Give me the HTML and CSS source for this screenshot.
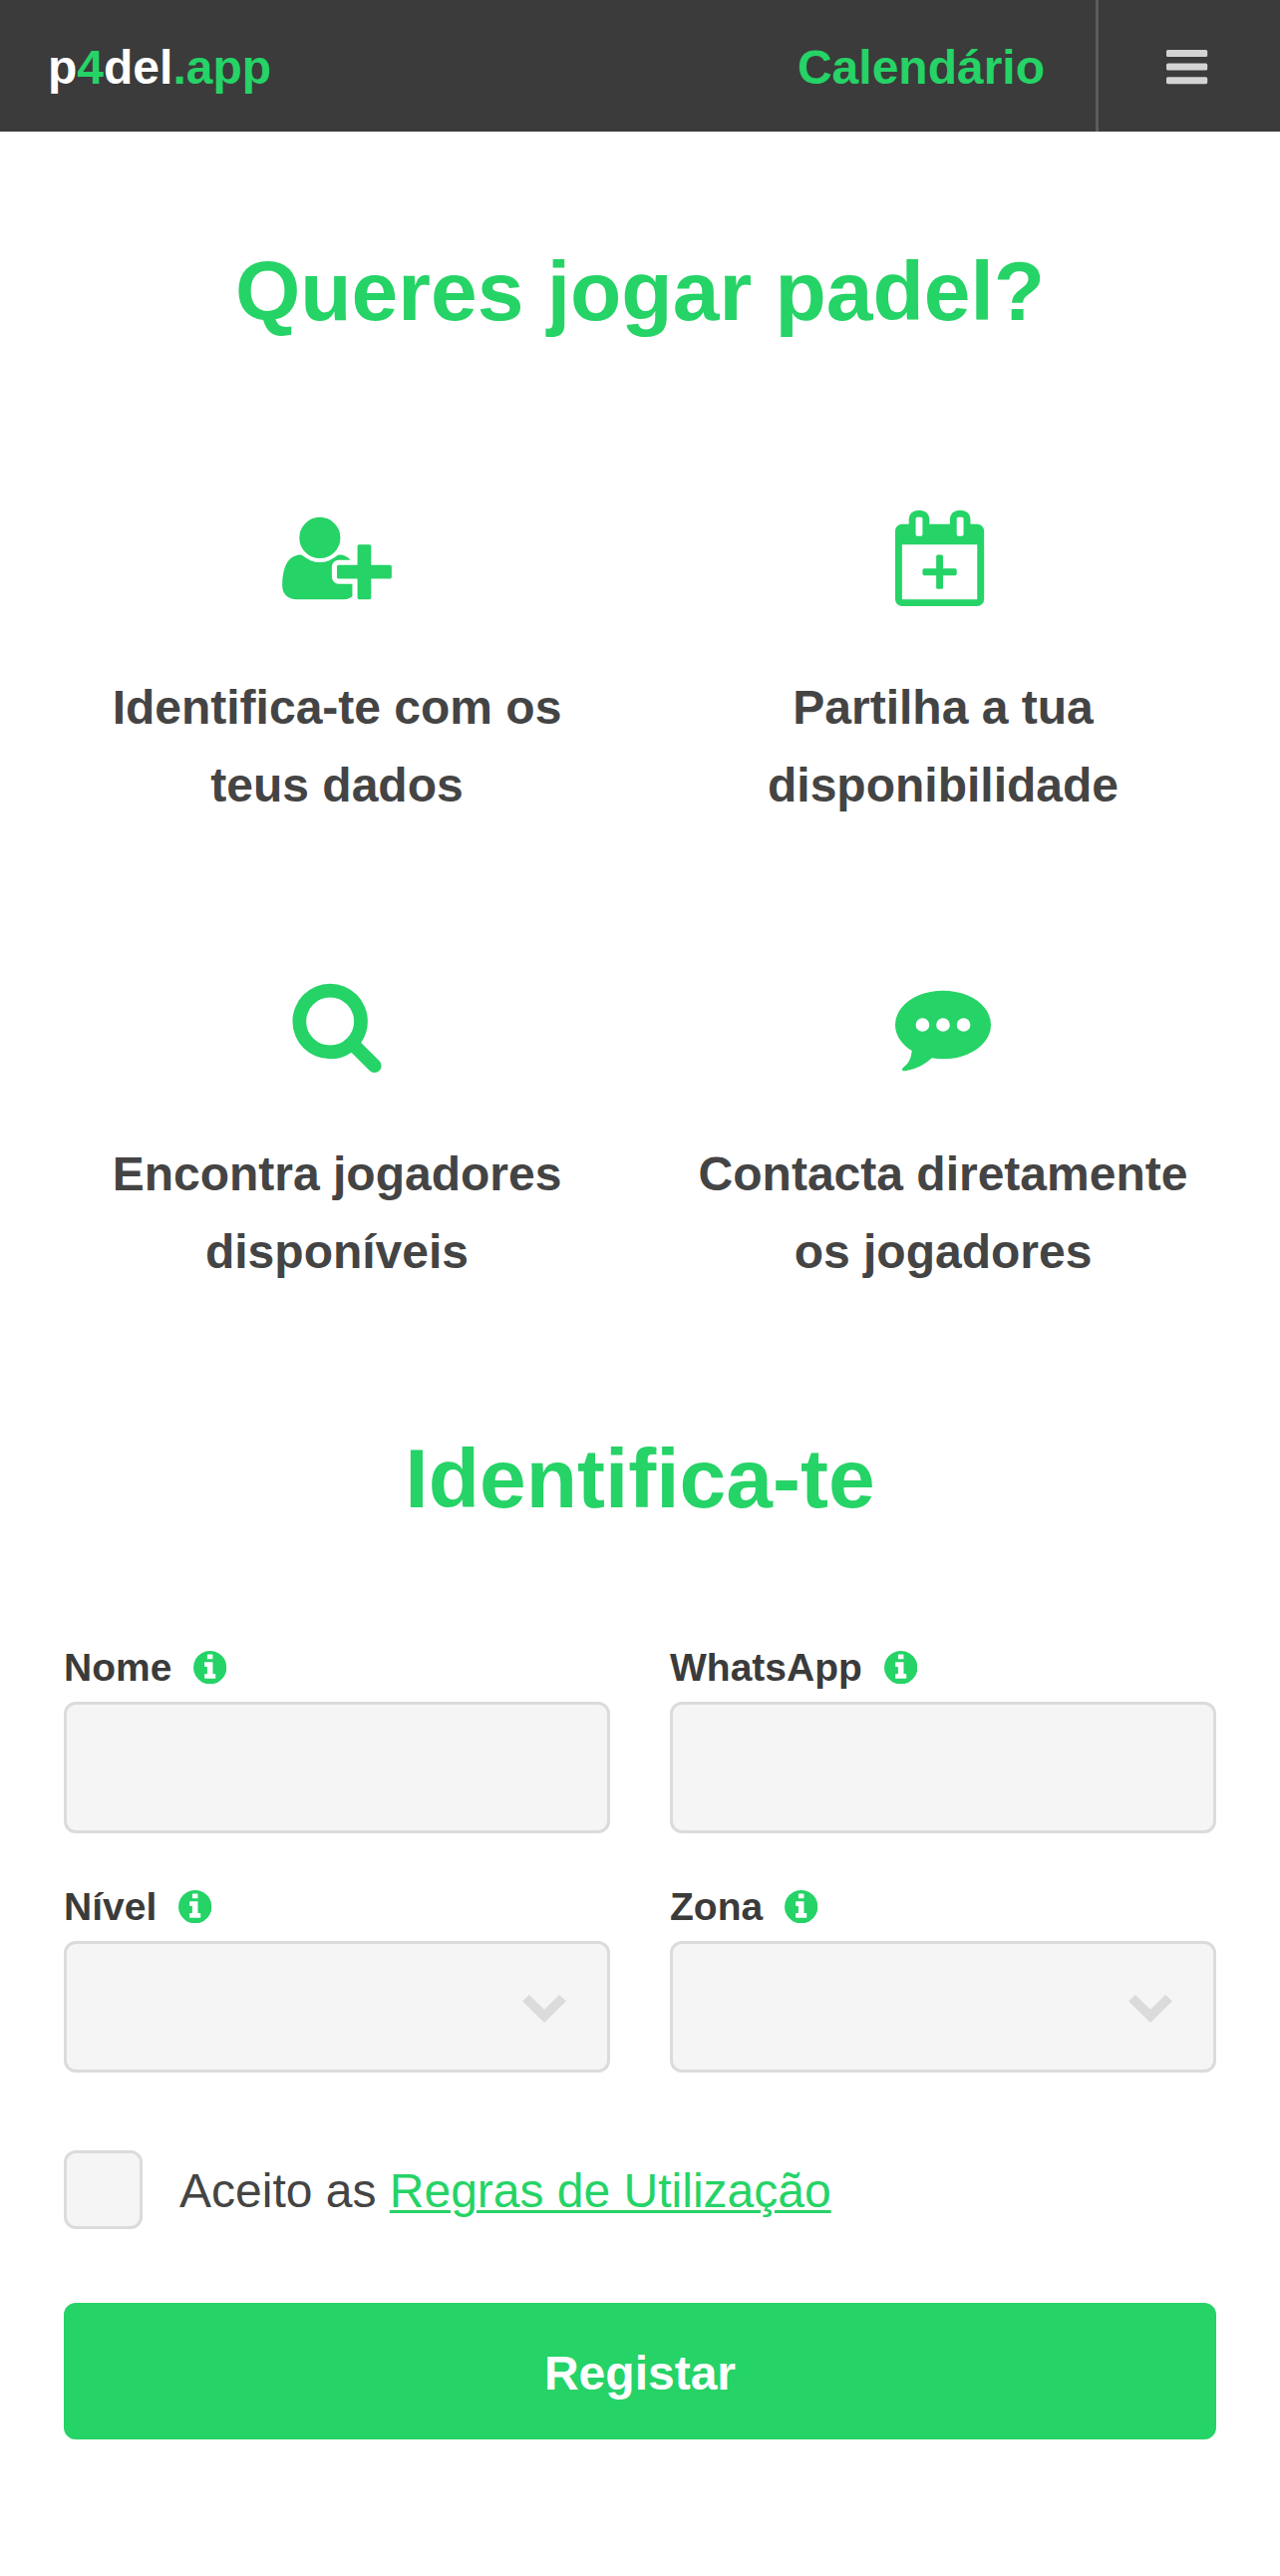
FILE: index.html
```html
<!DOCTYPE html>
<html lang="pt">
<head>
<meta charset="utf-8">
<title>p4del.app</title>
<link rel="stylesheet" href="styles.css">
</head>
<body>
<svg class="sprite" width="0" height="0" aria-hidden="true">
  <symbol id="info" viewBox="128 128 1536 1536"><path d="M1152 1376v-160q0-14-9-23t-23-9h-96v-512q0-14-9-23t-23-9h-320q-14 0-23 9t-9 23v160q0 14 9 23t23 9h96v320h-96q-14 0-23 9t-9 23v160q0 14 9 23t23 9h448q14 0 23-9t9-23zm-128-896v-160q0-14-9-23t-23-9h-192q-14 0-23 9t-9 23v160q0 14 9 23t23 9h192q14 0 23-9t9-23zm640 416q0 209-103 385.5t-279.5 279.5-385.5 103-385.5-103-279.5-279.5-103-385.5 103-385.5 279.5-279.5 385.5-103 385.5 103 279.5 279.5 103 385.5z"/></symbol>
  <symbol id="chevron" viewBox="0 0 44 28"><path d="M6.8 .4 22 15.2 37.2 .4 43.4 6.4 22 27.6 .6 6.4z" stroke-width=".8" stroke-linejoin="round"/></symbol>
</svg>

<header class="header">
  <a class="logo">p<span class="accent">4</span>del<span class="accent">.app</span></a>
  <nav class="nav">
    <a class="nav-link">Calendário</a>
    <button class="menu" aria-label="Menu">
      <svg class="menu-icon" viewBox="0 0 42 34"><rect width="41.2" height="7" rx="1.6"/><rect y="13.6" width="41.2" height="7" rx="1.6"/><rect y="27.2" width="41.2" height="7" rx="1.6"/></svg>
    </button>
  </nav>
</header>

<main class="main">
  <h1 class="title">Queres jogar padel?</h1>

  <section class="steps">
    <div class="step">
      <svg class="step-icon step-icon-wide" viewBox="0 0 2048 1792"><path d="M704 896q-159 0-271.5-112.5t-112.5-271.5 112.5-271.5 271.5-112.5 271.5 112.5 112.5 271.5-112.5 271.5-271.5 112.5zm960 128h352q13 0 22.500 9.500t9.500 22.500v192q0 13-9.500 22.500t-22.500 9.500h-352v352q0 13-9.500 22.500t-22.500 9.500h-192q-13 0-22.500-9.500t-9.500-22.500v-352h-352q-13 0-22.500-9.500t-9.500-22.500v-192q0-13 9.500-22.500t22.500-9.500h352v-352q0-13 9.500-22.500t22.500-9.500h192q13 0 22.500 9.500t9.500 22.500v352zm-736 224q0 52 38 90t90 38h256v238q-68 50-171 50h-874q-121 0-194-69t-73-190q0-53 3.500-103.500t14-109 26.500-108.500 43-97.500 62-81 85.500-53.500 111.500-20q19 0 39 17 79 61 154.500 91.500t164.500 30.500 164.500-30.500 154.500-91.500q20-17 39-17 132 0 217 96h-223q-52 0-90 38t-38 90v192z"/></svg>
      <p class="step-text">Identifica-te com os<br>teus dados</p>
    </div>
    <div class="step">
      <svg class="step-icon" viewBox="64 0 1792 1792"><path fill-rule="evenodd" d="M192 1664h1408v-1024h-1408v1024zm384-1216v-288q0-14-9-23t-23-9h-64q-14 0-23 9t-9 23v288q0 14 9 23t23 9h64q14 0 23-9t9-23zm768 0v-288q0-14-9-23t-23-9h-64q-14 0-23 9t-9 23v288q0 14 9 23t23 9h64q14 0 23-9t9-23zm384-64v1280q0 52-38 90t-90 38h-1408q-52 0-90-38t-38-90v-1280q0-52 38-90t90-38h128v-96q0-66 47-113t113-47h64q66 0 113 47t47 113v96h384v-96q0-66 47-113t113-47h64q66 0 113 47t47 113v96h128q52 0 90 38t38 90z"/><rect x="576" y="1088" width="640" height="128" rx="32"/><rect x="832" y="832" width="128" height="640" rx="32"/></svg>
      <p class="step-text">Partilha a tua<br>disponibilidade</p>
    </div>
    <div class="step">
      <svg class="step-icon" viewBox="0 0 1792 1792"><path d="M1216 832q0-185-131.5-316.5t-316.5-131.5-316.5 131.5-131.5 316.5 131.5 316.5 316.5 131.5 316.5-131.5 131.5-316.5zm512 832q0 52-38 90t-90 38q-54 0-90-38l-343-342q-179 124-399 124-143 0-273.5-55.5t-225-150-150-225-55.5-273.5 55.5-273.5 150-225 225-150 273.5-55.5 273.5 55.5 225 150 150 225 55.5 273.5q0 220-124 399l343 343q37 37 37 90z"/></svg>
      <p class="step-text">Encontra jogadores<br>disponíveis</p>
    </div>
    <div class="step">
      <svg class="step-icon" viewBox="0 0 1792 1792"><path d="M640 896q0-53-37.500-90.500t-90.500-37.500-90.500 37.500-37.500 90.500 37.500 90.500 90.500 37.500 90.500-37.500 37.500-90.500zm384 0q0-53-37.500-90.500t-90.500-37.500-90.500 37.500-37.500 90.500 37.500 90.500 90.500 37.500 90.500-37.500 37.500-90.500zm384 0q0-53-37.500-90.500t-90.500-37.500-90.500 37.500-37.500 90.500 37.500 90.500 90.500 37.500 90.500-37.500 37.500-90.500zm384 0q0 174-120 321.500t-326 233-450 85.500q-110 0-211-18-173 173-435 229-52 10-86 13-12 1-22-6t-13-18q-4-15 20-37 5-5 23.500-21.500t25.500-23.500 23.500-25.500 24-31.500 20.500-37 20-48 14.500-57.500 12.500-72.500q-146-90-229.500-216.500t-83.500-269.500q0-174 120-321.500t326-233 450-85.500 450 85.500 326 233 120 321.500z"/></svg>
      <p class="step-text">Contacta diretamente<br>os jogadores</p>
    </div>
  </section>

  <h2 class="title title-form">Identifica-te</h2>

  <form class="form">
    <div class="fields">
      <div class="field">
        <label class="label" for="nome">Nome <svg class="info"><use href="#info"/></svg></label>
        <input class="control" id="nome" type="text">
      </div>
      <div class="field">
        <label class="label" for="whatsapp">WhatsApp <svg class="info"><use href="#info"/></svg></label>
        <input class="control" id="whatsapp" type="text">
      </div>
      <div class="field">
        <label class="label" for="nivel">Nível <svg class="info"><use href="#info"/></svg></label>
        <div class="select">
          <select class="control" id="nivel"></select>
          <svg class="chevron"><use href="#chevron"/></svg>
        </div>
      </div>
      <div class="field">
        <label class="label" for="zona">Zona <svg class="info"><use href="#info"/></svg></label>
        <div class="select">
          <select class="control" id="zona"></select>
          <svg class="chevron"><use href="#chevron"/></svg>
        </div>
      </div>
    </div>
    <div class="terms">
      <input class="checkbox" id="regras" type="checkbox">
      <label class="terms-text" for="regras">Aceito as <a class="link">Regras de Utilização</a></label>
    </div>
    <button class="submit" type="button">Registar</button>
  </form>
</main>
</body>
</html>
```

FILE: styles.css
```css
* {
  box-sizing: border-box;
}

body {
  margin: 0;
  background: #fff;
  color: #444;
  font-family: "Liberation Sans", Arial, sans-serif;
  font-size: 48px;
  font-variant-ligatures: none;
}

button,
input,
select {
  margin: 0;
  border: 0;
  font: inherit;
  appearance: none;
}

.sprite {
  display: block;
}

.header {
  display: flex;
  justify-content: space-between;
  height: 132px;
  padding-left: 48px;
  background: #3b3b3b;
  font-weight: bold;
}

.logo,
.nav-link {
  padding-top: 4px;
  line-height: 128px;
}

.logo {
  color: #fff;
}

.accent,
.nav-link {
  color: #25d366;
}

.nav {
  display: flex;
}

.nav-link {
  padding-right: 51px;
}

.menu {
  display: flex;
  align-items: center;
  width: 185px;
  padding: 2px 0 0 68px;
  border-left: 3px solid #5c5c5c;
  background: transparent;
}

.menu-icon {
  width: 42px;
  height: 34px;
  overflow: visible;
  fill: #d4d4d4;
}

.main {
  padding: 118px 64px 0;
}

.title {
  margin: 0;
  color: #25d366;
  font-size: 84px;
  line-height: 84px;
  text-align: center;
}

.steps {
  display: grid;
  grid-template-columns: 1fr 1fr;
  gap: 153px 60px;
  padding-top: 178px;
}

.step {
  display: flex;
  flex-direction: column;
  align-items: center;
  gap: 63px;
}

.step-icon {
  width: 96px;
  height: 96px;
  fill: #25d366;
}

.step-icon-wide {
  width: 110px;
}

.step-text {
  margin: 0;
  font-weight: bold;
  line-height: 78px;
  text-align: center;
  white-space: nowrap;
}

.title-form {
  margin: 146px 0 128px;
}

.fields {
  display: grid;
  grid-template-columns: 1fr 1fr;
  gap: 54px 60px;
}

.field {
  display: flex;
  flex-direction: column;
  gap: 15px;
}

.label {
  display: flex;
  align-items: center;
  gap: 22px;
  height: 39px;
  color: #3b3b3b;
  font-size: 39px;
  font-weight: bold;
  line-height: 39px;
}

.info {
  width: 33.4px;
  height: 33.4px;
  fill: #25d366;
}

.control {
  width: 100%;
  height: 132px;
  padding: 0 36px;
  border: 3px solid #dbdbdb;
  border-radius: 12px;
  background: #f5f5f5;
}

/* The chevron shares the select's grid cell */
.select {
  display: grid;
  align-items: center;
}

.select > * {
  grid-area: 1 / 1;
}

.chevron {
  justify-self: end;
  width: 44px;
  height: 28px;
  margin: 4px 44px 0 0;
  fill: #dbdbdb;
  stroke: #dbdbdb;
  pointer-events: none;
}

.terms {
  display: flex;
  align-items: flex-start;
  gap: 37px;
  margin: 78px 0 72px;
}

.checkbox {
  width: 79px;
  height: 79px;
  border: 3px solid #dbdbdb;
  border-radius: 12px;
  background: #f5f5f5;
}

.terms-text {
  line-height: 81px;
}

.link {
  color: #25d366;
  text-decoration: underline;
  text-decoration-thickness: 3px;
  text-underline-offset: 3px;
}

.submit {
  display: block;
  width: 100%;
  height: 137px;
  padding: 4px 0 0;
  border-radius: 12px;
  background: #25d366;
  color: #fff;
  font-weight: bold;
  line-height: 133px;
}
```
